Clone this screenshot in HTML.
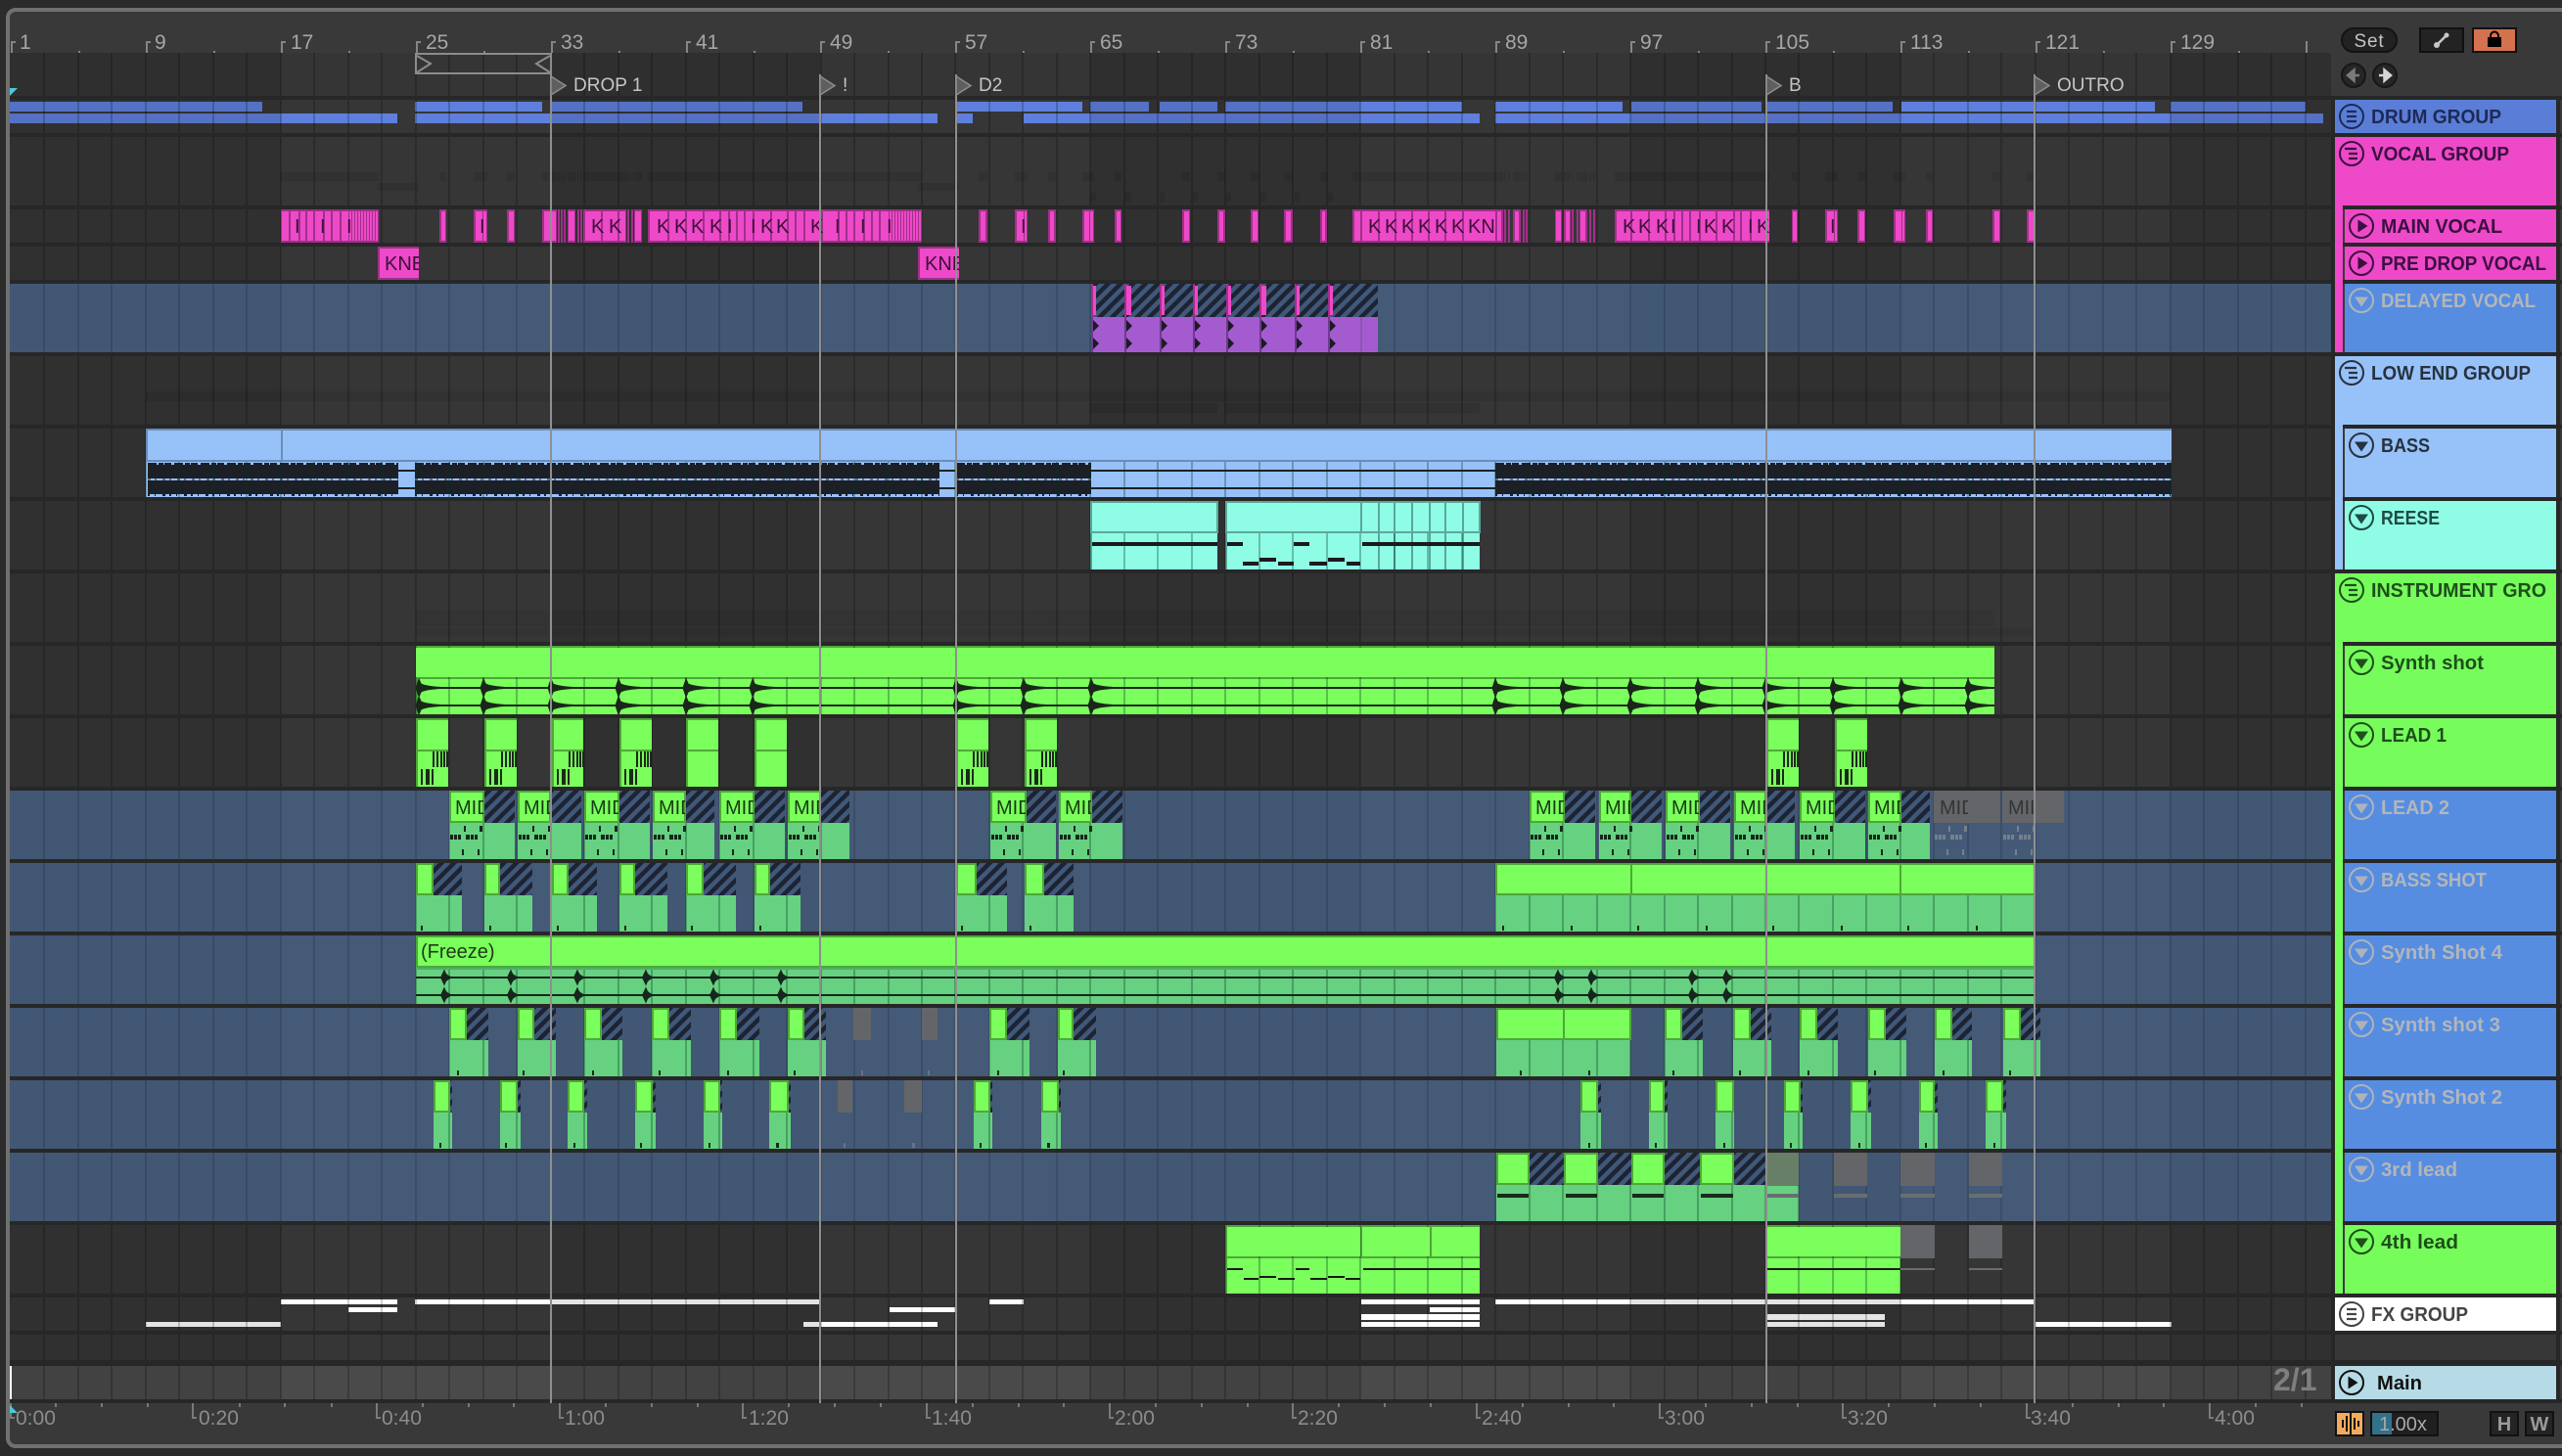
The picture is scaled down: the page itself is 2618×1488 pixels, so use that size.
<!DOCTYPE html>
<html><head><meta charset="utf-8"><title>Arrangement</title>
<style>
html,body{margin:0;padding:0;background:#2b2b2b;width:2618px;height:1488px;overflow:hidden}
svg{display:block;font-family:"Liberation Sans",sans-serif}
.r{font-size:21px;fill:#a6a6a6}
.tm{font-size:21px;fill:#8c8c8c}
.loc{font-size:19px;fill:#c6c6c6}
.h{font-size:20px;font-weight:700}
.k{font-size:20px;fill:#3b1038}
.m{font-size:20px;fill:#163a14}
.mg{font-size:20px;fill:#343436}
</style></head><body>
<svg xmlns="http://www.w3.org/2000/svg" width="2618" height="1488" viewBox="0 0 2618 1488" shape-rendering="crispEdges">
<defs>
<pattern id="hp" width="9" height="9" patternUnits="userSpaceOnUse" patternTransform="rotate(45)"><rect width="9" height="9" fill="#1d2331"/><rect width="4.5" height="9" fill="#40587a"/></pattern>
<path id="gl" fill="none" stroke-width="2" d="M45 54V1430M80 54V1430M114 54V1430M149 54V1430M183 54V1430M218 54V1430M252 54V1430M287 54V1430M321 54V1430M356 54V1430M390 54V1430M425 54V1430M459 54V1430M494 54V1430M528 54V1430M563 54V1430M597 54V1430M632 54V1430M666 54V1430M701 54V1430M735 54V1430M770 54V1430M804 54V1430M839 54V1430M873 54V1430M908 54V1430M942 54V1430M976 54V1430M1011 54V1430M1045 54V1430M1080 54V1430M1114 54V1430M1149 54V1430M1183 54V1430M1218 54V1430M1252 54V1430M1287 54V1430M1321 54V1430M1356 54V1430M1390 54V1430M1425 54V1430M1459 54V1430M1494 54V1430M1528 54V1430M1563 54V1430M1597 54V1430M1632 54V1430M1666 54V1430M1701 54V1430M1735 54V1430M1770 54V1430M1804 54V1430M1838 54V1430M1873 54V1430M1907 54V1430M1942 54V1430M1976 54V1430M2011 54V1430M2045 54V1430M2080 54V1430M2114 54V1430M2149 54V1430M2183 54V1430M2218 54V1430M2252 54V1430M2287 54V1430M2321 54V1430M2356 54V1430"/>
<path id="n1" fill="#1a2a1a" d="M17 34h2v16h-2zM21 34h2v16h-2zM25 34h2v16h-2zM28 34h2v16h-2zM31 34h2v16h-2zM5 52h2v16h-2zM10 52h2v16h-2zM12 52h2v16h-2zM16 52h2v16h-2z"/>
<path id="n2" d="M15 36h2v6h-2zM31 36h3v6h-3zM1 45h3v5h-3zM5 45h3v5h-3zM9 45h3v5h-3zM17 45h4v5h-4zM22 45h3v5h-3zM26 45h3v5h-3zM13 60h2v6h-2zM29 60h2v6h-2z"/>
<path id="s1" fill="#1a261a" shape-rendering="geometricPrecision" d="M-3.500 0L0-10.500L2.500-4.500Q7-1.800 26-.8V.8Q7 1.800 2.500 4.500L0 10.500z"/>
<path id="s2" fill="#16261c" shape-rendering="geometricPrecision" d="M-4 0L0-8.500L2-4Q5-1 10 0Q5 1 2 4L0 8.500z"/>
<path id="tr" fill="#1b1b22" shape-rendering="geometricPrecision" d="M0-6L6 0L0 6z"/>
<g id="gf" fill="none" stroke="currentColor" stroke-width="2" shape-rendering="geometricPrecision"><circle r="12"/><path d="M-5-5H5M-5 0H5M-5 5H5" stroke-width="2.200"/></g>
<g id="gu" fill="none" stroke="currentColor" stroke-width="2" shape-rendering="geometricPrecision"><circle r="12"/><path d="M-7-5H5M-3 0H6M-3 5H6" stroke-width="2.200"/></g>
<g id="ip" shape-rendering="geometricPrecision"><circle r="12" fill="none" stroke="currentColor" stroke-width="2"/><path d="M-3.500-6.500L6.500 0L-3.500 6.500z" fill="currentColor"/></g>
<g id="id" shape-rendering="geometricPrecision"><circle r="12" fill="none" stroke="currentColor" stroke-width="2"/><path d="M-7-3.500H7L0 6.500z" fill="currentColor"/></g>
<path id="mvo" d="M287 214H387V248H287zM449 214H456V248H449zM484 214H498V248H484zM518 214H526V248H518zM554 214H569V248H554zM570 214H572V248H570zM573 214H575V248H573zM576 214H578V248H576zM580 214H588V248H580zM590 214H592V248H590zM593 214H595V248H593zM596 214H640V248H596zM641 214H643V248H641zM645 214H647V248H645zM648 214H656V248H648zM662 214H942V248H662zM1000 214H1009V248H1000zM1037 214H1050V248H1037zM1071 214H1079V248H1071zM1106 214H1118V248H1106zM1139 214H1146V248H1139zM1208 214H1216V248H1208zM1244 214H1252V248H1244zM1278 214H1286V248H1278zM1312 214H1321V248H1312zM1349 214H1356V248H1349zM1382 214H1536V248H1382zM1537 214H1539V248H1537zM1541 214H1543V248H1541zM1546 214H1554V248H1546zM1556 214H1558V248H1556zM1559 214H1561V248H1559zM1589 214H1596V248H1589zM1598 214H1605V248H1598zM1606 214H1608V248H1606zM1611 214H1613V248H1611zM1614 214H1622V248H1614zM1624 214H1626V248H1624zM1628 214H1630V248H1628zM1650 214H1808V248H1650zM1831 214H1837V248H1831zM1865 214H1878V248H1865zM1898 214H1906V248H1898zM1935 214H1947V248H1935zM1968 214H1975V248H1968zM2036 214H2044V248H2036zM2071 214H2079V248H2071z"/>
<path id="blu" d="M10 290H2382V360H10zM10 808H2382V878H10zM10 882H2382V952H10zM10 956H2382V1026H10zM10 1030H2382V1100H10zM10 1104H2382V1174H10zM10 1178H2382V1248H10z"/>
<clipPath id="cblu"><use href="#blu"/></clipPath>
</defs>

<rect width="2618" height="1488" fill="#2b2b2b"/>
<rect x="8" y="10" width="2700" height="1468" rx="8" fill="#393939" stroke="#707070" stroke-width="4" shape-rendering="geometricPrecision"/>

<!-- top ruler -->
<path fill="#858585" d="M11 42h2v12h-2zM13 42h3v2h-3zM149 42h2v12h-2zM151 42h3v2h-3zM287 42h2v12h-2zM289 42h3v2h-3zM425 42h2v12h-2zM427 42h3v2h-3zM563 42h2v12h-2zM565 42h3v2h-3zM701 42h2v12h-2zM703 42h3v2h-3zM838 42h2v12h-2zM840 42h3v2h-3zM976 42h2v12h-2zM978 42h3v2h-3zM1114 42h2v12h-2zM1116 42h3v2h-3zM1252 42h2v12h-2zM1254 42h3v2h-3zM1390 42h2v12h-2zM1392 42h3v2h-3zM1528 42h2v12h-2zM1530 42h3v2h-3zM1666 42h2v12h-2zM1668 42h3v2h-3zM1804 42h2v12h-2zM1806 42h3v2h-3zM1942 42h2v12h-2zM1944 42h3v2h-3zM2080 42h2v12h-2zM2082 42h3v2h-3zM2218 42h2v12h-2zM2220 42h3v2h-3zM2356 42h2v12h-2zM80 52h2v2h-2zM218 52h2v2h-2zM356 52h2v2h-2zM494 52h2v2h-2zM632 52h2v2h-2zM770 52h2v2h-2zM907 52h2v2h-2zM1045 52h2v2h-2zM1183 52h2v2h-2zM1321 52h2v2h-2zM1459 52h2v2h-2zM1597 52h2v2h-2zM1735 52h2v2h-2zM1873 52h2v2h-2zM2011 52h2v2h-2zM2149 52h2v2h-2zM2287 52h2v2h-2z"/>
<text class="r" x="20" y="50">1</text><text class="r" x="158" y="50">9</text><text class="r" x="297" y="50">17</text><text class="r" x="435" y="50">25</text><text class="r" x="573" y="50">33</text><text class="r" x="711" y="50">41</text><text class="r" x="848" y="50">49</text><text class="r" x="986" y="50">57</text><text class="r" x="1124" y="50">65</text><text class="r" x="1262" y="50">73</text><text class="r" x="1400" y="50">81</text><text class="r" x="1538" y="50">89</text><text class="r" x="1676" y="50">97</text><text class="r" x="1814" y="50">105</text><text class="r" x="1952" y="50">113</text><text class="r" x="2090" y="50">121</text><text class="r" x="2228" y="50">129</text>

<!-- row backgrounds -->
<rect x="10" y="54" width="2372" height="44" fill="#353535"/>
<rect x="10" y="98" width="2372" height="1292" fill="#363636"/>
<rect x="10" y="1396" width="2372" height="34" fill="#4a4a4a"/>

<!-- drum clips (darkened by band) -->
<path fill="#5f7fdc" d="M10 104H268V114H10zM424 104H554V114H424zM563 104H820V114H563zM977 104H1106V114H977zM1114 104H1174V114H1114zM1185 104H1244V114H1185zM1252 104H1494V114H1252zM1528 104H1658V114H1528zM1667 104H1800V114H1667zM1805 104H1934V114H1805zM1943 104H2202V114H1943zM2218 104H2356V114H2218zM10 116H406V126H10zM424 116H958V126H424zM977 116H994V126H977zM1046 116H1512V126H1046zM1528 116H2374V126H1528z"/>
<!-- fx clips -->
<path fill="#ffffff" d="M287 1328H406V1333H287zM424 1328H838V1333H424zM1011 1328H1046V1333H1011zM1391 1328H1512V1333H1391zM1528 1328H2078V1333H1528zM356 1336H406V1341H356zM909 1336H976V1341H909zM1461 1336H1512V1341H1461zM1391 1343H1512V1349H1391zM1806 1343H1926V1349H1806zM149 1351H287V1356H149zM821 1351H958V1356H821zM1391 1351H1512V1356H1391zM1806 1351H1926V1356H1806zM2079 1351H2219V1356H2079z"/>
<use href="#gl" stroke="rgba(0,0,0,.2)"/>
<!-- 16 bar bands -->
<path fill="rgba(0,0,0,.105)" d="M10 54H287V1430H10zM563 54H838V1430H563zM1114 54H1390V1430H1114zM1666 54H1942V1430H1666zM2218 54H2382V1430H2218z"/>

<!-- blue inactive rows -->
<use href="#blu" fill="#445a77"/>
<g clip-path="url(#cblu)">
<path fill="rgba(0,0,0,.03)" d="M10 54H287V1430H10zM563 54H838V1430H563zM1114 54H1390V1430H1114zM1666 54H1942V1430H1666zM2218 54H2382V1430H2218z"/>
<use href="#gl" stroke="rgba(0,0,0,.13)"/>
</g>

<!-- ghost group summaries -->
<g fill="rgba(0,0,0,.09)">
<use href="#mvo" transform="translate(0 176) scale(1 .265) translate(0 -214)"/>
<path d="M386 187H428V195H386zM938 187H980V195H938z"/>
<path d="M1114 197H1120V206H1114zM1149 197H1156V206H1149zM1185 197H1190V206H1185zM1219 197H1224V206H1219zM1253 197H1258V206H1253zM1287 197H1294V206H1287zM1323 197H1328V206H1323zM1357 197H1362V206H1357z"/>
<path fill="rgba(0,0,0,.07)" d="M149 400H2219V410H149z"/>
<path d="M1114 412H1244V422H1114zM1252 412H1512V422H1252z"/>
<path fill="rgba(0,0,0,.05)" d="M425 624H2038V640H425zM425 642H2079V650H425z"/>
</g>

<!-- separators -->
<path fill="#272727" d="M10 98H2618V102H10zM10 136H2618V140H10zM10 210H2618V214H10zM10 248H2618V252H10zM10 286H2618V290H10zM10 360H2618V364H10zM10 434H2618V438H10zM10 508H2618V512H10zM10 582H2618V586H10zM10 656H2618V660H10zM10 730H2618V734H10zM10 804H2618V808H10zM10 878H2618V882H10zM10 952H2618V956H10zM10 1026H2618V1030H10zM10 1100H2618V1104H10zM10 1174H2618V1178H10zM10 1248H2618V1252H10zM10 1322H2618V1326H10zM10 1360H2618V1364H10zM10 1390H2618V1396H10zM10 1430H2618V1434H10z"/>

<!-- main vocal -->
<use href="#mvo" fill="#a0308a"/>
<path fill="#ee49c8" d="M288 216H295V246H288zM297 216H305V246H297zM307 216H312V246H307zM314 216H320V246H314zM322 216H330V246H322zM332 216H338V246H332zM340 216H347V246H340zM349 216H356V246H349zM357 216H359V246H357zM360 216H362V246H360zM363 216H365V246H363zM366 216H368V246H366zM369 216H371V246H369zM372 216H374V246H372zM375 216H377V246H375zM378 216H380V246H378zM381 216H383V246H381zM384 216H386V246H384zM451 216H455V246H451zM486 216H493V246H486zM494 216H497V246H494zM520 216H525V246H520zM556 216H568V246H556zM581 216H587V246H581zM598 216H614V246H598zM616 216H631V246H616zM633 216H639V246H633zM649 216H655V246H649zM664 216H682V246H664zM684 216H700V246H684zM702 216H718V246H702zM720 216H735V246H720zM737 216H744V246H737zM746 216H752V246H746zM754 216H760V246H754zM762 216H769V246H762zM771 216H787V246H771zM789 216H804V246H789zM806 216H812V246H806zM814 216H821V246H814zM823 216H839V246H823zM841 216H856V246H841zM858 216H864V246H858zM866 216H872V246H866zM874 216H882V246H874zM884 216H890V246H884zM892 216H898V246H892zM900 216H908V246H900zM909 216H911V246H909zM912 216H914V246H912zM915 216H917V246H915zM918 216H920V246H918zM921 216H923V246H921zM924 216H926V246H924zM927 216H929V246H927zM930 216H932V246H930zM933 216H935V246H933zM936 216H938V246H936zM939 216H941V246H939zM1002 216H1007V246H1002zM1039 216H1046V246H1039zM1047 216H1049V246H1047zM1073 216H1077V246H1073zM1108 216H1113V246H1108zM1114 216H1117V246H1114zM1141 216H1145V246H1141zM1210 216H1215V246H1210zM1246 216H1250V246H1246zM1280 216H1285V246H1280zM1314 216H1319V246H1314zM1351 216H1354V246H1351zM1384 216H1390V246H1384zM1392 216H1408V246H1392zM1410 216H1425V246H1410zM1427 216H1442V246H1427zM1444 216H1459V246H1444zM1461 216H1476V246H1461zM1478 216H1494V246H1478zM1496 216H1528V246H1496zM1530 216H1534V246H1530zM1548 216H1552V246H1548zM1590 216H1595V246H1590zM1600 216H1604V246H1600zM1615 216H1620V246H1615zM1652 216H1666V246H1652zM1668 216H1684V246H1668zM1686 216H1701V246H1686zM1703 216H1710V246H1703zM1712 216H1718V246H1712zM1720 216H1726V246H1720zM1728 216H1736V246H1728zM1738 216H1753V246H1738zM1755 216H1771V246H1755zM1773 216H1778V246H1773zM1780 216H1788V246H1780zM1790 216H1808V246H1790zM1832 216H1836V246H1832zM1867 216H1874V246H1867zM1875 216H1877V246H1875zM1900 216H1905V246H1900zM1937 216H1943V246H1937zM1944 216H1946V246H1944zM1970 216H1974V246H1970zM2038 216H2043V246H2038zM2073 216H2079V246H2073z"/>
<g class="k">
<text x="301" y="238">I</text><text x="327" y="238">I</text><text x="354" y="238">I</text><text x="490" y="238">I</text>
<text x="604" y="238">K</text><text x="622" y="238">K</text><text x="671" y="238">K</text><text x="689" y="238">K</text><text x="706" y="238">K</text><text x="725" y="238">K</text><text x="743" y="238">I</text><text x="767" y="238">I</text><text x="777" y="238">K</text><text x="793" y="238">K</text><text x="828" y="238">K</text><text x="853" y="238">I</text><text x="879" y="238">I</text><text x="906" y="238">I</text>
<text x="1043" y="238">I</text><text x="1398" y="238">K</text><text x="1415" y="238">K</text><text x="1432" y="238">K</text><text x="1449" y="238">K</text><text x="1466" y="238">K</text><text x="1483" y="238">K</text><text x="1500" y="238">KN</text>
<text x="1658" y="238">K</text><text x="1674" y="238">K</text><text x="1692" y="238">K</text><text x="1707" y="238">I</text><text x="1733" y="238">I</text><text x="1741" y="238">K</text><text x="1759" y="238">K</text><text x="1786" y="238">I</text><text x="1795" y="238">K</text><text x="1870" y="238">I</text>
</g>
<!-- pre drop -->
<path fill="#a0308a" d="M386 252H428V286H386zM938 252H980V286H938z"/>
<path fill="#ee49c8" d="M388 254H428V284H388zM940 254H980V284H940z"/>
<svg x="388" y="252" width="40" height="34"><text class="k" x="5" y="24">KNE</text></svg>
<svg x="940" y="252" width="40" height="34"><text class="k" x="5" y="24">KNE</text></svg>

<!-- delayed vocal -->
<rect x="1115" y="290" width="293" height="34" fill="url(#hp)"/>
<path fill="#a52f8d" d="M1115 290H1117V324H1115zM1149 290H1151V324H1149zM1185 290H1187V324H1185zM1219 290H1221V324H1219zM1253 290H1255V324H1253zM1287 290H1289V324H1287zM1323 290H1325V324H1323zM1357 290H1359V324H1357z"/>
<path fill="#ee49c8" d="M1117 292H1120V322H1117zM1151 292H1156V322H1151zM1187 292H1190V322H1187zM1221 292H1224V322H1221zM1255 292H1258V322H1255zM1289 292H1294V322H1289zM1325 292H1328V322H1325zM1359 292H1362V322H1359z"/>
<rect id="dvb" x="1115" y="324" width="293" height="36" fill="#a55bd0"/>
<path fill="#6f3a92" d="M1115 324H1117V360H1115zM1149 324H1151V360H1149zM1185 324H1187V360H1185zM1219 324H1221V360H1219zM1253 324H1255V360H1253zM1287 324H1289V360H1287zM1323 324H1325V360H1323zM1357 324H1359V360H1357z"/>
<path fill="#8a57b4" d="M1390 324H1392V360H1390z"/>
<g>
<use href="#tr" x="1117" y="333"/><use href="#tr" x="1117" y="351"/><use href="#tr" x="1151" y="333"/><use href="#tr" x="1151" y="351"/><use href="#tr" x="1187" y="333"/><use href="#tr" x="1187" y="351"/><use href="#tr" x="1221" y="333"/><use href="#tr" x="1221" y="351"/><use href="#tr" x="1255" y="333"/><use href="#tr" x="1255" y="351"/><use href="#tr" x="1289" y="333"/><use href="#tr" x="1289" y="351"/><use href="#tr" x="1325" y="333"/><use href="#tr" x="1325" y="351"/><use href="#tr" x="1359" y="333"/><use href="#tr" x="1359" y="351"/>
</g>

<!-- bass -->
<rect x="149" y="438" width="2070" height="70" fill="#97c1f9"/>
<path fill="#6b8db8" d="M149 438H2219V440H149zM149 470H2219V472H149zM149 438H151V508H149zM287 438H289V470H287z"/>
<rect id="bsb" x="149" y="472" width="2070" height="36" fill="#97c1f9"/>
<path fill="#1c2026" d="M151 475H407V489H151zM151 491H407V505H151zM424 475H960V489H424zM424 491H960V505H424zM977 475H1115V489H977zM977 491H1115V505H977zM1528 475H2219V489H1528zM1528 491H2219V505H1528z"/>
<path fill="#1c2026" d="M407 480H424V482H407zM407 498H424V500H407zM960 480H977V482H960zM960 498H977V500H960zM1115 480H1528V482H1115zM1115 498H1528V500H1115z"/>
<path fill="none" stroke="#1c2026" stroke-width="2" stroke-dasharray="9 2 5 1 7 3" d="M151 474H407M424 474H960M977 474H1115M1528 474H2219"/>
<path fill="none" stroke="#1c2026" stroke-width="2" stroke-dasharray="2 5 1 7 3 4" d="M151 506H407M424 506H960M977 506H1115M1528 506H2219"/>
<path fill="none" stroke="#1c2026" stroke-width="1" stroke-dasharray="3 4 2 6" d="M151 490H407M424 490H960M977 490H1115M1528 490H2219"/>

<!-- reese -->
<path fill="#8ffde6" stroke="#5aa89a" stroke-width="2" d="M1115 513H1244V544H1115zM1253 513H1512V544H1253z"/>
<path id="rsb" fill="#8ffde6" d="M1114 545H1244V582H1114zM1252 545H1512V582H1252z"/>
<path fill="#5aa89a" d="M1114 545H1116V582H1114zM1252 545H1254V582H1252zM1390 512H1392V545H1390zM1408 512H1410V582H1408zM1424 512H1426V582H1424zM1442 512H1444V582H1442zM1460 512H1462V582H1460zM1476 512H1478V582H1476zM1494 512H1496V582H1494z"/>
<path fill="#1a1a1a" d="M1116 554H1244V558H1116zM1254 554H1270V558H1254zM1322 554H1338V558H1322zM1392 554H1512V558H1392zM1270 574H1286V578H1270zM1287 570H1304V574H1287zM1306 574H1322V578H1306zM1338 574H1356V578H1338zM1357 570H1374V574H1357zM1376 574H1390V578H1376z"/>

<!-- synth shot -->
<path id="ssb" fill="#7bff5c" d="M425 660H2038V730H425z"/>
<path fill="#4ea838" d="M425 660H2038V662H425zM425 692H2038V694H425zM425 660H427V730H425z"/>

<!-- lead 1 -->
<path fill="#7bff5c" d="M425 734H458V804H425zM495 734H528V804H495zM564 734H596V804H564zM633 734H666V804H633zM701 734H734V804H701zM771 734H804V804H771zM977 734H1010V804H977zM1047 734H1080V804H1047zM1805 734H1838V804H1805zM1875 734H1908V804H1875z"/>
<path fill="#4ea838" d="M425 734H458V736H425zM425 766H458V768H425zM495 734H528V736H495zM495 766H528V768H495zM564 734H596V736H564zM564 766H596V768H564zM633 734H666V736H633zM633 766H666V768H633zM701 734H734V736H701zM701 766H734V768H701zM771 734H804V736H771zM771 766H804V768H771zM977 734H1010V736H977zM977 766H1010V768H977zM1047 734H1080V736H1047zM1047 766H1080V768H1047zM1805 734H1838V736H1805zM1805 766H1838V768H1805zM1875 734H1908V736H1875zM1875 766H1908V768H1875zM425 734H427V804H425zM495 734H497V804H495zM564 734H566V804H564zM633 734H635V804H633zM701 734H703V804H701zM771 734H773V804H771zM977 734H979V804H977zM1047 734H1049V804H1047zM1805 734H1807V804H1805zM1875 734H1877V804H1875z"/>
<use href="#n1" x="425" y="734"/><use href="#n1" x="495" y="734"/><use href="#n1" x="564" y="734"/><use href="#n1" x="633" y="734"/><use href="#n1" x="977" y="734"/><use href="#n1" x="1047" y="734"/><use href="#n1" x="1805" y="734"/><use href="#n1" x="1875" y="734"/>

<!-- blue-row bodies -->
<path id="bd" fill="#66d180" d="M459 841H526V878H459zM529 841H594V878H529zM597 841H664V878H597zM667 841H730V878H667zM735 841H802V878H735zM805 841H868V878H805zM1012 841H1079V878H1012zM1082 841H1147V878H1082zM1563 841H1630V878H1563zM1634 841H1698V878H1634zM1702 841H1768V878H1702zM1772 841H1834V878H1772zM1839 841H1906V878H1839zM1909 841H1972V878H1909z
M425 915H472V952H425zM495 915H544V952H495zM564 915H610V952H564zM633 915H682V952H633zM701 915H752V952H701zM771 915H818V952H771zM977 915H1029V952H977zM1047 915H1097V952H1047zM1528 915H2079V952H1528z
M425 989H2079V1026H425z
M459 1063H499V1100H459zM529 1063H568V1100H529zM597 1063H636V1100H597zM666 1063H706V1100H666zM735 1063H776V1100H735zM805 1063H844V1100H805zM1011 1063H1052V1100H1011zM1081 1063H1120V1100H1081zM1529 1063H1666V1100H1529zM1701 1063H1740V1100H1701zM1771 1063H1810V1100H1771zM1839 1063H1878V1100H1839zM1909 1063H1948V1100H1909zM1977 1063H2015V1100H1977zM2047 1063H2085V1100H2047z
M443 1137H462V1174H443zM511 1137H532V1174H511zM580 1137H600V1174H580zM649 1137H670V1174H649zM719 1137H738V1174H719zM786 1137H808V1174H786zM995 1137H1014V1174H995zM1064 1137H1084V1174H1064zM1615 1137H1636V1174H1615zM1685 1137H1704V1174H1685zM1753 1137H1772V1174H1753zM1823 1137H1842V1174H1823zM1891 1137H1912V1174H1891zM1961 1137H1980V1174H1961zM2029 1137H2050V1174H2029z
M1529 1211H1838V1248H1529z"/>

<!-- hatches -->
<path fill="url(#hp)" d="M494 808H526V841H494zM562 808H594V841H562zM632 808H664V841H632zM700 808H730V841H700zM770 808H802V841H770zM838 808H868V841H838zM1048 808H1079V841H1048zM1115 808H1147V841H1115zM1598 808H1630V841H1598zM1666 808H1698V841H1666zM1736 808H1768V841H1736zM1804 808H1834V841H1804zM1874 808H1906V841H1874zM1942 808H1972V841H1942z
M442 882H472V915H442zM510 882H544V915H510zM580 882H610V915H580zM648 882H682V915H648zM718 882H752V915H718zM786 882H818V915H786zM997 882H1029V915H997zM1066 882H1097V915H1066z
M476 1030H499V1063H476zM545 1030H568V1063H545zM614 1030H636V1063H614zM683 1030H706V1063H683zM752 1030H776V1063H752zM821 1030H844V1063H821zM1028 1030H1052V1063H1028zM1096 1030H1120V1063H1096zM1718 1030H1740V1063H1718zM1788 1030H1810V1063H1788zM1856 1030H1878V1063H1856zM1926 1030H1948V1063H1926zM1994 1030H2015V1063H1994zM2064 1030H2085V1063H2064z
M459 1104H462V1137H459zM528 1104H532V1137H528zM596 1104H600V1137H596zM666 1104H670V1137H666zM735 1104H738V1137H735zM805 1104H808V1137H805zM1011 1104H1014V1137H1011zM1081 1104H1084V1137H1081zM1632 1104H1636V1137H1632zM1700 1104H1704V1137H1700zM1771 1104H1772V1137H1771zM1839 1104H1842V1137H1839zM1908 1104H1912V1137H1908zM1976 1104H1980V1137H1976zM2046 1104H2050V1137H2046z
M1562 1178H1599V1211H1562zM1632 1178H1667V1211H1632zM1700 1178H1737V1211H1700zM1771 1178H1805V1211H1771z"/>

<!-- grey disabled clips -->
<path fill="#646568" d="M1976 808H2044V841H1976zM2046 808H2109V841H2046zM872 1030H890V1063H872zM942 1030H958V1063H942zM856 1104H871V1137H856zM924 1104H942V1137H924zM1874 1178H1908V1212H1874zM1942 1178H1977V1212H1942zM2012 1178H2046V1212H2012zM1942 1252H1977V1286H1942zM2012 1252H2046V1286H2012z"/>
<rect x="1805" y="1178" width="33" height="34" fill="#667f66"/>

<!-- green titles -->
<path fill="#7bff5c" stroke="#4ea838" stroke-width="2" d="M460 809H494V840H460zM530 809H562V840H530zM598 809H632V840H598zM668 809H700V840H668zM736 809H770V840H736zM806 809H838V840H806zM1013 809H1048V840H1013zM1083 809H1115V840H1083zM1564 809H1598V840H1564zM1635 809H1666V840H1635zM1703 809H1736V840H1703zM1773 809H1804V840H1773zM1840 809H1874V840H1840zM1910 809H1942V840H1910z
M426 883H442V914H426zM496 883H510V914H496zM565 883H580V914H565zM634 883H648V914H634zM702 883H718V914H702zM772 883H786V914H772zM978 883H997V914H978zM1048 883H1066V914H1048zM1529 883H1667V914H1529zM1667 883H1805V914H1667zM1805 883H1942V914H1805zM1942 883H2079V914H1942z
M426 957H2079V988H426z
M460 1031H476V1062H460zM530 1031H545V1062H530zM598 1031H614V1062H598zM667 1031H683V1062H667zM736 1031H752V1062H736zM806 1031H821V1062H806zM1012 1031H1028V1062H1012zM1082 1031H1096V1062H1082zM1530 1031H1598V1062H1530zM1598 1031H1666V1062H1598zM1702 1031H1718V1062H1702zM1772 1031H1788V1062H1772zM1840 1031H1856V1062H1840zM1910 1031H1926V1062H1910zM1978 1031H1994V1062H1978zM2048 1031H2064V1062H2048z
M444 1105H459V1136H444zM512 1105H528V1136H512zM581 1105H596V1136H581zM650 1105H666V1136H650zM720 1105H735V1136H720zM787 1105H805V1136H787zM996 1105H1011V1136H996zM1065 1105H1081V1136H1065zM1616 1105H1632V1136H1616zM1686 1105H1700V1136H1686zM1754 1105H1771V1136H1754zM1824 1105H1839V1136H1824zM1892 1105H1908V1136H1892zM1962 1105H1976V1136H1962zM2030 1105H2046V1136H2030z
M1530 1179H1562V1210H1530zM1599 1179H1632V1210H1599zM1668 1179H1700V1210H1668zM1738 1179H1771V1210H1738z"/>

<!-- 4th lead -->
<path id="l4" fill="#7bff5c" d="M1252 1252H1512V1322H1252zM1805 1252H1942V1322H1805z"/>
<path fill="#4ea838" d="M1252 1252H1512V1254H1252zM1252 1284H1512V1286H1252zM1252 1252H1254V1322H1252zM1390 1252H1392V1284H1390zM1461 1252H1463V1284H1461zM1805 1252H1942V1254H1805zM1805 1284H1942V1286H1805z"/>

<!-- body grid overlay -->
<clipPath id="cb"><use href="#bd"/><use href="#ssb"/><use href="#l4"/><use href="#bsb"/><use href="#rsb"/></clipPath>
<g clip-path="url(#cb)"><use href="#gl" stroke="rgba(0,50,30,.3)"/></g>
<path fill="#7bff5c" d="M425 662H2038V692H425zM1254 1254H1390V1284H1254zM1392 1254H1461V1284H1392zM1463 1254H1512V1284H1463zM1805 1254H1942V1284H1805z"/>
<path fill="#97c1f9" d="M151 440H287V470H151zM289 440H2219V470H289z"/>
<path fill="#4fb06a" d="M425 989H2079V991H425z"/>

<!-- synth shot waveform -->
<path fill="#1a261a" d="M425 702H2038V704H425zM425 720H2038V722H425z"/>
<g>
<use href="#s1" x="428" y="703"/><use href="#s1" x="428" y="721"/><use href="#s1" x="494" y="703"/><use href="#s1" x="494" y="721"/><use href="#s1" x="563" y="703"/><use href="#s1" x="563" y="721"/><use href="#s1" x="632" y="703"/><use href="#s1" x="632" y="721"/><use href="#s1" x="701" y="703"/><use href="#s1" x="701" y="721"/><use href="#s1" x="769" y="703"/><use href="#s1" x="769" y="721"/><use href="#s1" x="977" y="703"/><use href="#s1" x="977" y="721"/><use href="#s1" x="1046" y="703"/><use href="#s1" x="1046" y="721"/><use href="#s1" x="1115" y="703"/><use href="#s1" x="1115" y="721"/><use href="#s1" x="1528" y="703"/><use href="#s1" x="1528" y="721"/><use href="#s1" x="1597" y="703"/><use href="#s1" x="1597" y="721"/><use href="#s1" x="1666" y="703"/><use href="#s1" x="1666" y="721"/><use href="#s1" x="1735" y="703"/><use href="#s1" x="1735" y="721"/><use href="#s1" x="1804" y="703"/><use href="#s1" x="1804" y="721"/><use href="#s1" x="1873" y="703"/><use href="#s1" x="1873" y="721"/><use href="#s1" x="1943" y="703"/><use href="#s1" x="1943" y="721"/><use href="#s1" x="2011" y="703"/><use href="#s1" x="2011" y="721"/>
</g>

<!-- freeze waveform -->
<text class="m" x="430" y="979" style="fill:#1d3a1a">(Freeze)</text>
<path fill="#16261c" d="M425 998H2079V1000H425zM425 1016H2079V1018H425z"/>
<g>
<use href="#s2" x="454" y="999"/><use href="#s2" x="454" y="1017"/><use href="#s2" x="522" y="999"/><use href="#s2" x="522" y="1017"/><use href="#s2" x="590" y="999"/><use href="#s2" x="590" y="1017"/><use href="#s2" x="660" y="999"/><use href="#s2" x="660" y="1017"/><use href="#s2" x="729" y="999"/><use href="#s2" x="729" y="1017"/><use href="#s2" x="798" y="999"/><use href="#s2" x="798" y="1017"/><use href="#s2" x="1592" y="999"/><use href="#s2" x="1592" y="1017"/><use href="#s2" x="1626" y="999"/><use href="#s2" x="1626" y="1017"/><use href="#s2" x="1729" y="999"/><use href="#s2" x="1729" y="1017"/><use href="#s2" x="1764" y="999"/><use href="#s2" x="1764" y="1017"/>
</g>

<!-- lead 2 notes + titles -->
<g fill="#16261c">
<use href="#n2" x="459" y="808"/><use href="#n2" x="529" y="808"/><use href="#n2" x="597" y="808"/><use href="#n2" x="667" y="808"/><use href="#n2" x="735" y="808"/><use href="#n2" x="805" y="808"/><use href="#n2" x="1012" y="808"/><use href="#n2" x="1082" y="808"/><use href="#n2" x="1563" y="808"/><use href="#n2" x="1634" y="808"/><use href="#n2" x="1702" y="808"/><use href="#n2" x="1772" y="808"/><use href="#n2" x="1839" y="808"/><use href="#n2" x="1909" y="808"/>
</g>
<g fill="#767f8c"><use href="#n2" x="1976" y="808"/><use href="#n2" x="2046" y="808"/></g>
<svg x="459" y="808" width="35" height="33"><text class="m" x="6" y="24">MIDI</text></svg>
<svg x="529" y="808" width="33" height="33"><text class="m" x="6" y="24">MIDI</text></svg>
<svg x="597" y="808" width="35" height="33"><text class="m" x="6" y="24">MIDI</text></svg>
<svg x="667" y="808" width="33" height="33"><text class="m" x="6" y="24">MIDI</text></svg>
<svg x="735" y="808" width="35" height="33"><text class="m" x="6" y="24">MIDI</text></svg>
<svg x="805" y="808" width="33" height="33"><text class="m" x="6" y="24">MIDI</text></svg>
<svg x="1012" y="808" width="36" height="33"><text class="m" x="6" y="24">MIDI</text></svg>
<svg x="1082" y="808" width="33" height="33"><text class="m" x="6" y="24">MIDI</text></svg>
<svg x="1563" y="808" width="35" height="33"><text class="m" x="6" y="24">MIDI</text></svg>
<svg x="1634" y="808" width="32" height="33"><text class="m" x="6" y="24">MIDI</text></svg>
<svg x="1702" y="808" width="34" height="33"><text class="m" x="6" y="24">MIDI</text></svg>
<svg x="1772" y="808" width="32" height="33"><text class="m" x="6" y="24">MIDI</text></svg>
<svg x="1839" y="808" width="35" height="33"><text class="m" x="6" y="24">MIDI</text></svg>
<svg x="1909" y="808" width="33" height="33"><text class="m" x="6" y="24">MIDI</text></svg>
<svg x="1976" y="808" width="35" height="33"><text class="mg" x="6" y="24">MIDI</text></svg>
<svg x="2046" y="808" width="33" height="33"><text class="mg" x="6" y="24">MIDI</text></svg>

<!-- ticks -->
<path fill="#1a2a1a" d="M430 946h2v5h-2zM500 946h2v5h-2zM569 946h2v5h-2zM638 946h2v5h-2zM706 946h2v5h-2zM776 946h2v5h-2zM982 946h2v5h-2zM1052 946h2v5h-2zM1535 946h2v5h-2zM1605 946h2v5h-2zM1673 946h2v5h-2zM1743 946h2v5h-2zM1811 946h2v5h-2zM1881 946h2v5h-2zM1949 946h2v5h-2zM2019 946h2v5h-2z
M467 1094h2v5h-2zM534 1094h2v5h-2zM605 1094h2v5h-2zM673 1094h2v5h-2zM743 1094h2v5h-2zM811 1094h2v5h-2zM1019 1094h2v5h-2zM1086 1094h2v5h-2zM1553 1094h2v5h-2zM1623 1094h2v5h-2zM1709 1094h2v5h-2zM1777 1094h2v5h-2zM1847 1094h2v5h-2zM1915 1094h2v5h-2zM1985 1094h2v5h-2zM2053 1094h2v5h-2z
M449 1168h2v5h-2zM516 1168h2v5h-2zM586 1168h2v5h-2zM654 1168h2v5h-2zM724 1168h2v5h-2zM793 1168h3v5h-3zM1001 1168h2v5h-2zM1070 1168h3v5h-3zM1623 1168h2v5h-2zM1691 1168h2v5h-2zM1761 1168h2v5h-2zM1829 1168h2v5h-2zM1899 1168h2v5h-2zM1967 1168h2v5h-2zM2037 1168h2v5h-2z
M1530 1220H1562V1224H1530zM1600 1220H1632V1224H1600zM1668 1220H1700V1224H1668zM1738 1220H1771V1224H1738z"/>
<path fill="#6a7380" d="M880 1094h2v5h-2zM948 1094h2v5h-2zM862 1168h2v5h-2zM932 1168h3v5h-3z"/>
<path fill="#6a6d70" d="M1805 1220H1838V1224H1805zM1874 1220H1908V1224H1874zM1942 1220H1977V1224H1942zM2012 1220H2046V1224H2012zM1942 1296H1977V1298H1942zM2012 1296H2046V1298H2012z"/>

<!-- 4th lead notes -->
<path fill="#1a1a1a" d="M1254 1296H1270V1298H1254zM1324 1296H1338V1298H1324zM1393 1296H1512V1298H1393zM1271 1306H1286V1308H1271zM1306 1306H1323V1308H1306zM1339 1306H1356V1308H1339zM1375 1306H1390V1308H1375zM1287 1304H1304V1306H1287zM1357 1304H1374V1306H1357zM1805 1296H1942V1298H1805z"/>

<!-- loop brace -->
<rect x="425" y="55" width="138" height="20" fill="none" stroke="#8c8c8c" stroke-width="2"/>
<path fill="none" stroke="#8c8c8c" stroke-width="2" shape-rendering="geometricPrecision" d="M426 57L440 65L426 74M562 57L548 65L562 74"/>

<!-- markers -->
<path fill="#52c6dc" shape-rendering="geometricPrecision" d="M10 90H18L10 98z"/>
<rect x="10" y="1396" width="2" height="34" fill="#ffffff"/>

<!-- locators -->
<path fill="#8f8f8f" d="M562 76H564V1434H562zM837 76H839V1434H837zM976 76H978V1434H976zM1804 76H1806V1434H1804zM2078 76H2080V1434H2078z"/>
<g fill="#5f5f5f" stroke="#8d8d8d" stroke-width="1.500" shape-rendering="geometricPrecision">
<path d="M563 78L578 87.500L563 97z"/><path d="M838 78L853 87.500L838 97z"/><path d="M977 78L992 87.500L977 97z"/><path d="M1805 78L1820 87.500L1805 97z"/><path d="M2079 78L2094 87.500L2079 97z"/>
</g>
<text class="loc" x="586" y="93">DROP 1</text><text class="loc" x="861" y="93">!</text><text class="loc" x="1000" y="93">D2</text><text class="loc" x="1828" y="93">B</text><text class="loc" x="2102" y="93">OUTRO</text>

<!-- right panel -->
<rect x="2382" y="12" width="240" height="86" fill="#393939"/>
<rect x="2382" y="98" width="4" height="1336" fill="#272727"/>
<rect x="2612" y="98" width="4" height="1336" fill="#272727"/>
<rect x="2386" y="1364" width="226" height="26" fill="#373737"/>

<!-- side bars -->
<rect x="2386" y="140" width="8" height="220" fill="#ee49c8"/>
<rect x="2386" y="364" width="8" height="218" fill="#97c1f9"/>
<rect x="2386" y="586" width="8" height="736" fill="#76fd5c"/>

<path fill="#5a7ed8" d="M2386 102H2612V136H2386z"/>
<path fill="#ee49c8" d="M2386 140H2612V210H2386zM2396 214H2612V248H2396zM2396 252H2612V286H2396z"/>
<path fill="#97c1f9" d="M2386 364H2612V434H2386zM2396 438H2612V508H2396z"/>
<path fill="#8ffde6" d="M2396 512H2612V582H2396z"/>
<path fill="#76fd5c" d="M2386 586H2612V656H2386zM2396 660H2612V730H2396zM2396 734H2612V804H2396zM2396 1252H2612V1322H2396z"/>
<path fill="#568de0" d="M2396 290H2612V360H2396zM2396 808H2612V878H2396zM2396 882H2612V952H2396zM2396 956H2612V1026H2396zM2396 1030H2612V1100H2396zM2396 1104H2612V1174H2396zM2396 1178H2612V1248H2396z"/>
<path fill="#ffffff" d="M2386 1326H2612V1360H2386z"/>
<path fill="#b6dbe6" d="M2386 1396H2612V1430H2386z"/>

<g shape-rendering="geometricPrecision">
<use href="#gf" x="2403" y="119" style="color:#1e2a55"/><text class="h" x="2423" y="126" fill="#1e2a55" textLength="133" lengthAdjust="spacingAndGlyphs">DRUM GROUP</text>
<use href="#gu" x="2403" y="157" style="color:#3a1040"/><text class="h" x="2423" y="164" fill="#3a1040" textLength="141" lengthAdjust="spacingAndGlyphs">VOCAL GROUP</text>
<use href="#ip" x="2413" y="231" style="color:#3a1040"/><text class="h" x="2433" y="238" fill="#3a1040" textLength="124" lengthAdjust="spacingAndGlyphs">MAIN VOCAL</text>
<use href="#ip" x="2413" y="269" style="color:#3a1040"/><text class="h" x="2433" y="276" fill="#3a1040" textLength="169" lengthAdjust="spacingAndGlyphs">PRE DROP VOCAL</text>
<use href="#id" x="2413" y="307" style="color:#aeb3ba"/><text class="h" x="2433" y="314" fill="#b3b6bb" textLength="158" lengthAdjust="spacingAndGlyphs">DELAYED VOCAL</text>
<use href="#gu" x="2403" y="381" style="color:#27323f"/><text class="h" x="2423" y="388" fill="#27323f" textLength="163" lengthAdjust="spacingAndGlyphs">LOW END GROUP</text>
<use href="#id" x="2413" y="455" style="color:#27323f"/><text class="h" x="2433" y="462" fill="#27323f" textLength="50" lengthAdjust="spacingAndGlyphs">BASS</text>
<use href="#id" x="2413" y="529" style="color:#1f4a42"/><text class="h" x="2433" y="536" fill="#1f4a42" textLength="60" lengthAdjust="spacingAndGlyphs">REESE</text>
<use href="#gu" x="2403" y="603" style="color:#1e4f1a"/><text class="h" x="2423" y="610" fill="#1e4f1a" textLength="179" lengthAdjust="spacingAndGlyphs">INSTRUMENT GRO</text>
<use href="#id" x="2413" y="677" style="color:#1e4f1a"/><text class="h" x="2433" y="684" fill="#1e4f1a" textLength="105" lengthAdjust="spacingAndGlyphs">Synth shot</text>
<use href="#id" x="2413" y="751" style="color:#1e4f1a"/><text class="h" x="2433" y="758" fill="#1e4f1a" textLength="67" lengthAdjust="spacingAndGlyphs">LEAD 1</text>
<use href="#id" x="2413" y="825" style="color:#aeb3ba"/><text class="h" x="2433" y="832" fill="#b3b6bb" textLength="70" lengthAdjust="spacingAndGlyphs">LEAD 2</text>
<use href="#id" x="2413" y="899" style="color:#aeb3ba"/><text class="h" x="2433" y="906" fill="#b3b6bb" textLength="108" lengthAdjust="spacingAndGlyphs">BASS SHOT</text>
<use href="#id" x="2413" y="973" style="color:#aeb3ba"/><text class="h" x="2433" y="980" fill="#b3b6bb" textLength="124" lengthAdjust="spacingAndGlyphs">Synth Shot 4</text>
<use href="#id" x="2413" y="1047" style="color:#aeb3ba"/><text class="h" x="2433" y="1054" fill="#b3b6bb" textLength="122" lengthAdjust="spacingAndGlyphs">Synth shot 3</text>
<use href="#id" x="2413" y="1121" style="color:#aeb3ba"/><text class="h" x="2433" y="1128" fill="#b3b6bb" textLength="124" lengthAdjust="spacingAndGlyphs">Synth Shot 2</text>
<use href="#id" x="2413" y="1195" style="color:#aeb3ba"/><text class="h" x="2433" y="1202" fill="#b3b6bb" textLength="78" lengthAdjust="spacingAndGlyphs">3rd lead</text>
<use href="#id" x="2413" y="1269" style="color:#1e4f1a"/><text class="h" x="2433" y="1276" fill="#1e4f1a" textLength="79" lengthAdjust="spacingAndGlyphs">4th lead</text>
<use href="#gf" x="2403" y="1343" style="color:#444444"/><text class="h" x="2423" y="1350" fill="#444444" textLength="99" lengthAdjust="spacingAndGlyphs">FX GROUP</text>
<use href="#ip" x="2403" y="1413" style="color:#111111"/><text class="h" x="2429" y="1420" fill="#111111" textLength="46" lengthAdjust="spacingAndGlyphs">Main</text>
</g>

<!-- 2/1 -->
<text x="2323" y="1421" font-size="32" font-weight="700" fill="#7f7f7f">2/1</text>

<!-- top controls -->
<g shape-rendering="geometricPrecision">
<rect x="2393" y="29" width="56" height="24" rx="12" fill="#222222" stroke="#131313" stroke-width="2"/>
<text x="2421" y="48" text-anchor="middle" font-size="19" letter-spacing=".8" fill="#c4c4c4">Set</text>
<rect x="2473" y="29" width="44" height="24" fill="#232323" stroke="#111111" stroke-width="2"/>
<path d="M2491 45L2499 37" stroke="#c8c8c8" stroke-width="2.500"/><circle cx="2490" cy="46" r="3" fill="#c8c8c8"/><circle cx="2500" cy="36" r="2.500" fill="#c8c8c8"/>
<rect x="2527" y="29" width="44" height="24" fill="#d4714e" stroke="#111111" stroke-width="2"/>
<path d="M2542 38H2556V48H2542z" fill="#000000"/><path d="M2545 38V36.500a4 4 0 0 1 8 0V38" fill="none" stroke="#000000" stroke-width="2"/>
<circle cx="2405" cy="77" r="12" fill="#262626" stroke="#171717" stroke-width="2"/>
<circle cx="2437" cy="77" r="12" fill="#262626" stroke="#171717" stroke-width="2"/>
<path d="M2411 77H2401M2405.500 71.500L2399 77L2405.500 82.500z" fill="#7a7a7a" stroke="#7a7a7a" stroke-width="2.500"/>
<path d="M2431 77H2441M2436.500 71.500L2443 77L2436.500 82.500z" fill="#d6d6d6" stroke="#d6d6d6" stroke-width="2.500"/>
</g>

<!-- bottom ruler -->
<path fill="#7a7a7a" d="M10 1434h2v16h-2zM12 1448h3v2h-3zM56 1434h2v4h-2zM103 1434h2v4h-2zM150 1434h2v4h-2zM196 1434h2v16h-2zM198 1448h3v2h-3zM244 1434h2v4h-2zM290 1434h2v4h-2zM338 1434h2v4h-2zM384 1434h2v16h-2zM386 1448h3v2h-3zM431 1434h2v4h-2zM478 1434h2v4h-2zM524 1434h2v4h-2zM571 1434h2v16h-2zM573 1448h3v2h-3zM618 1434h2v4h-2zM665 1434h2v4h-2zM712 1434h2v4h-2zM758 1434h2v16h-2zM760 1448h3v2h-3zM805 1434h2v4h-2zM852 1434h2v4h-2zM899 1434h2v4h-2zM946 1434h2v16h-2zM948 1448h3v2h-3zM993 1434h2v4h-2zM1040 1434h2v4h-2zM1086 1434h2v4h-2zM1133 1434h2v16h-2zM1135 1448h3v2h-3zM1180 1434h2v4h-2zM1227 1434h2v4h-2zM1274 1434h2v4h-2zM1320 1434h2v16h-2zM1322 1448h3v2h-3zM1367 1434h2v4h-2zM1414 1434h2v4h-2zM1461 1434h2v4h-2zM1508 1434h2v16h-2zM1510 1448h3v2h-3zM1555 1434h2v4h-2zM1602 1434h2v4h-2zM1648 1434h2v4h-2zM1695 1434h2v16h-2zM1697 1448h3v2h-3zM1742 1434h2v4h-2zM1789 1434h2v4h-2zM1836 1434h2v4h-2zM1882 1434h2v16h-2zM1884 1448h3v2h-3zM1929 1434h2v4h-2zM1976 1434h2v4h-2zM2023 1434h2v4h-2zM2070 1434h2v16h-2zM2072 1448h3v2h-3zM2117 1434h2v4h-2zM2164 1434h2v4h-2zM2210 1434h2v4h-2zM2257 1434h2v16h-2zM2259 1448h3v2h-3zM2304 1434h2v4h-2zM2351 1434h2v4h-2z"/>
<path fill="#52c6dc" shape-rendering="geometricPrecision" d="M10 1436L18 1444H10z"/>
<text class="tm" x="16" y="1456">0:00</text><text class="tm" x="203" y="1456">0:20</text><text class="tm" x="390" y="1456">0:40</text><text class="tm" x="577" y="1456">1:00</text><text class="tm" x="765" y="1456">1:20</text><text class="tm" x="952" y="1456">1:40</text><text class="tm" x="1139" y="1456">2:00</text><text class="tm" x="1326" y="1456">2:20</text><text class="tm" x="1514" y="1456">2:40</text><text class="tm" x="1701" y="1456">3:00</text><text class="tm" x="1888" y="1456">3:20</text><text class="tm" x="2075" y="1456">3:40</text><text class="tm" x="2263" y="1456">4:00</text>

<!-- bottom controls -->
<rect x="2387" y="1443" width="28" height="24" fill="#f3aa5d" stroke="#111111" stroke-width="2"/>
<path fill="#111111" d="M2393 1451h2v8h-2zM2397 1447h2v16h-2zM2401 1444h2v22h-2zM2405 1449h2v12h-2zM2409 1452h2v6h-2z"/>
<rect x="2423" y="1443" width="68" height="24" fill="#1f1f1f" stroke="#111111" stroke-width="2"/>
<rect x="2424" y="1444" width="20" height="22" fill="#33708a"/>
<text x="2431" y="1462" font-size="20" fill="#a8a8a8">1.00x</text>
<rect x="2545" y="1443" width="28" height="24" fill="#242424" stroke="#111111" stroke-width="2"/>
<text x="2559" y="1462" text-anchor="middle" font-size="20" font-weight="700" fill="#9a9a9a">H</text>
<rect x="2581" y="1443" width="28" height="24" fill="#242424" stroke="#111111" stroke-width="2"/>
<text x="2595" y="1462" text-anchor="middle" font-size="20" font-weight="700" fill="#9a9a9a">W</text>
</svg>
</body></html>
